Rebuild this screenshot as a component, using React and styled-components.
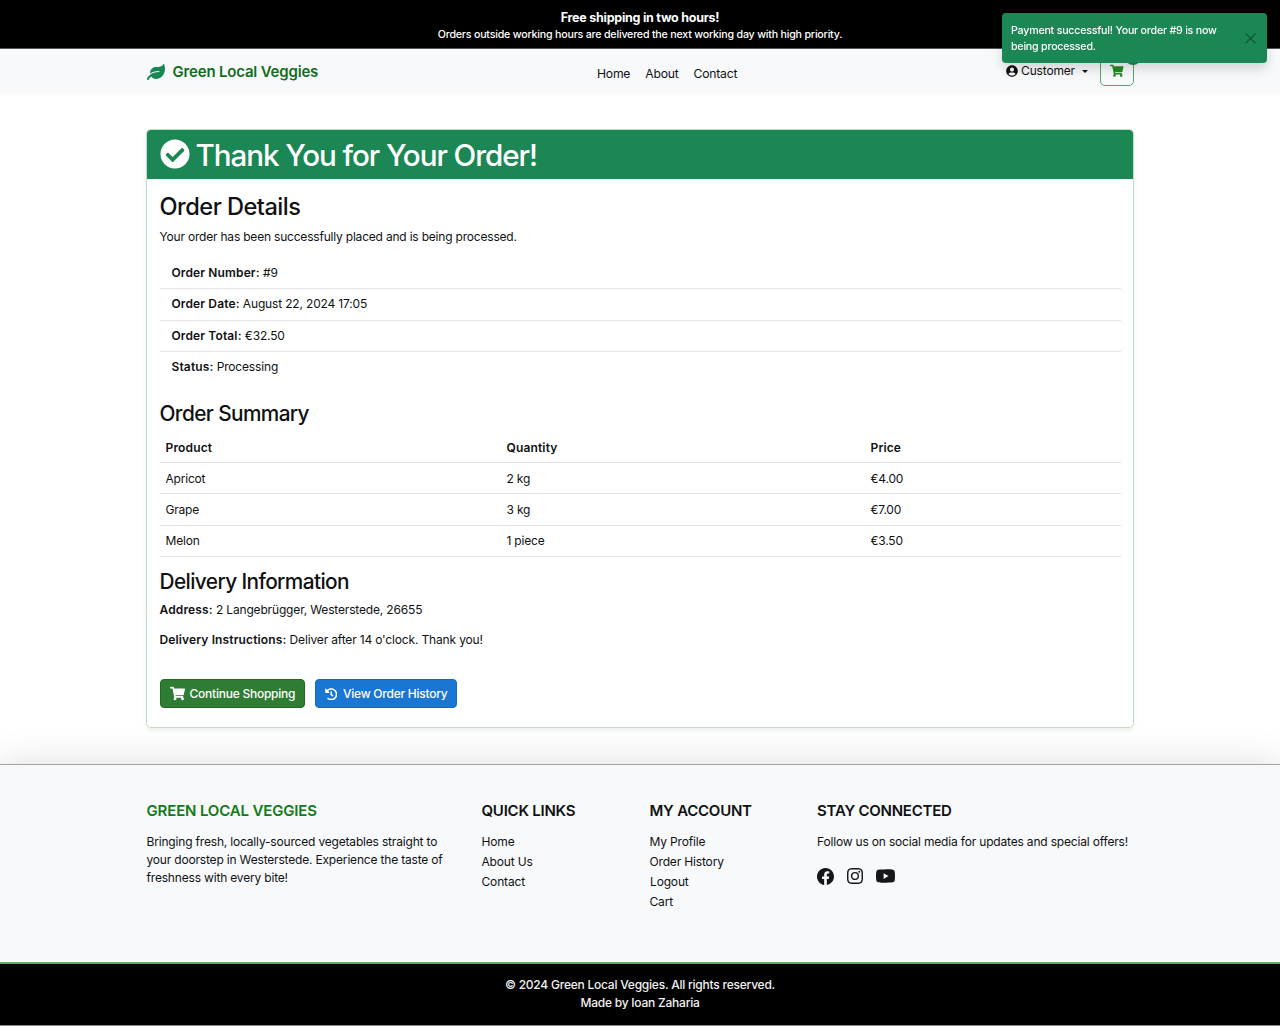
import React from "react";
import styled, { createGlobalStyle, css } from "styled-components";
import {
  FaCheckCircle,
  FaHistory,
  FaLeaf,
  FaShoppingCart,
  FaUserCircle,
} from "react-icons/fa";
import { BsFacebook, BsInstagram, BsYoutube } from "react-icons/bs";

const GlobalStyle = createGlobalStyle`
  * { box-sizing: border-box; }
  body {
    margin: 0;
    background: #fff;
    color: #0f1112;
    font-family: Inter, "Liberation Sans", sans-serif;
    font-size: 12px;
    line-height: 18.3px;
    letter-spacing: -0.16px;
  }
  h1, h2, h3, h4, p, ul { margin: 0; padding: 0; font-weight: 400; }
  ul { list-style: none; }
  a { color: inherit; text-decoration: none; }
  button { font: inherit; letter-spacing: inherit; }
  strong { font-weight: 600; letter-spacing: 0.13px; }
  svg { display: block; flex: none; }
`;

const Page = styled.div`
  height: 1026px;
  display: flex;
  flex-direction: column;
  overflow: hidden;
`;

const Container = styled.div`
  width: 987px;
  margin: 0 auto;
`;

const Banner = styled.div`
  height: 49px;
  padding-top: 9px;
  background: #000;
  border-bottom: 1px solid #55565a;
  color: #fff;
  text-align: center;
`;

const BannerTitle = styled.p`
  font-size: 12.5px;
  font-weight: 700;
  line-height: 17px;
  letter-spacing: -0.25px;
`;

const BannerText = styled.p`
  font-size: 10.67px;
  font-weight: 500;
  line-height: 17px;
  letter-spacing: -0.205px;
`;

const NavBar = styled.header`
  height: 43px;
  background: #f8f9fb;
  box-shadow: 0 1px 2px rgba(0, 0, 0, 0.05);
`;

const NavInner = styled(Container)`
  height: 43px;
  display: flex;
  justify-content: space-between;
  align-items: flex-start;
`;

const Brand = styled.a`
  display: flex;
  align-items: center;
  gap: 8px;
  margin-right: 10px;
  padding-top: 13px;
  height: 33px;
  color: #126d1b;
  font-size: 15px;
  font-weight: 600;
  letter-spacing: -0.18px;

  svg { color: #198754; margin-bottom: 1px; }
`;

const NavLinks = styled.nav`
  display: flex;
  gap: 15px;
  padding-top: 16px;
  font-size: 12.2px;
  letter-spacing: -0.22px;
`;

const Account = styled.div`
  display: flex;
  justify-content: flex-end;
  align-items: flex-start;
`;

const UserMenu = styled.a`
  display: flex;
  align-items: center;
  gap: 3px;
  margin: 13px 12px 0 0;
`;

const Caret = styled.span`
  margin-left: 4px;
  border: 3.6px solid transparent;
  border-top-color: #111;
  border-bottom: 0;
`;

const CartButton = styled.a`
  position: relative;
  display: flex;
  align-items: flex-end;
  justify-content: center;
  width: 34px;
  height: 29.5px;
  margin: 7px -0.5px 0 0;
  padding-bottom: 7px;
  border: 1px solid #5aa275;
  border-radius: 5px;
  color: #218c22;
`;

const CartBadge = styled.span`
  position: absolute;
  top: -8px;
  right: -8px;
  width: 16px;
  height: 16px;
  border-radius: 8px;
  background: #198754;
`;

const Toast = styled.div`
  position: fixed;
  top: 13px;
  right: 13px;
  z-index: 10;
  display: flex;
  align-items: center;
  justify-content: space-between;
  width: 265px;
  height: 50px;
  padding: 1px 11px 0 9px;
  border-radius: 4px;
  background: #1b8754;
  box-shadow: 0 6px 12px rgba(0, 0, 0, 0.15);
  color: #fff;
  font-size: 10.67px;
  line-height: 16px;
  letter-spacing: -0.22px;
`;

const ToastText = styled.p`
  width: 222px;
  font-weight: 500;
`;

const CloseButton = styled.button`
  padding: 0;
  border: 0;
  background: none;
  color: #0f5132;
`;

const Card = styled.main`
  width: 988px;
  height: 599px;
  margin: 37px auto 0;
  border: 1px solid #bfe0c4;
  border-radius: 5px;
  box-shadow: 0 2px 4px rgba(0, 0, 0, 0.075);
  overflow: hidden;
  display: flex;
  flex-direction: column;
`;

const CardHeader = styled.div`
  display: flex;
  align-items: center;
  gap: 6px;
  height: 49px;
  padding: 0 12.5px 0;
  background: #1b8754;
  color: #fff;

  svg { margin-bottom: 1px; }
`;

const CardTitle = styled.h1`
  font-size: 29.6px;
  font-weight: 500;
  line-height: 36px;
  letter-spacing: -1.07px;
`;

const CardBody = styled.div`
  padding: 13px 12.5px 12px;
`;

const SectionTitle = styled.h2`
  font-size: ${(p) => (p.$large ? 23.6 : 20.8)}px;
  font-weight: 500;
  line-height: ${(p) => (p.$large ? 30 : 26)}px;
  letter-spacing: ${(p) => (p.$large ? -0.52 : -0.6)}px;
`;

const Lead = styled.p`
  margin-top: 6px;
  letter-spacing: -0.2px;
`;

const DetailList = styled.ul`
  margin: 12px 0 18px;
`;

const DetailRow = styled.li`
  height: 31.2px;
  padding: 6px 12px 0;
  border-bottom: 1px solid #e3e5e7;

  &:last-child { border-bottom: 0; }
`;

const SummaryTable = styled.div`
  margin: 5px 0 12px;
`;

const SummaryRow = styled.div`
  display: grid;
  grid-template-columns: 341px 364px 1fr;
  height: 31.2px;
  padding: 6.5px 6px 0;
  border-bottom: 1px solid #e1e4e7;
  font-weight: ${(p) => (p.$head ? 600 : 400)};
  letter-spacing: ${(p) => (p.$head ? 0.15 : -0.2)}px;
`;

const Info = styled.p`
  margin-top: ${(p) => p.$gap}px;
`;

const Actions = styled.div`
  display: flex;
  gap: 10px;
  margin-top: 30px;
`;

const tones = {
  green: css`background: #2e7d32; border-color: #1b6e20;`,
  blue: css`background: #1976d2; border-color: #1568c5;`,
};

const Button = styled.button`
  display: flex;
  align-items: center;
  gap: ${(p) => p.$gap}px;
  width: ${(p) => p.$width}px;
  height: 29px;
  padding: 0 9px;
  border: 1px solid;
  border-radius: 4px;
  color: #fff;
  font-weight: 500;
  letter-spacing: -0.24px;
  white-space: nowrap;
  ${(p) => tones[p.$tone]}
`;

const Footer = styled.footer`
  position: relative;
  height: 198px;
  margin-top: 36px;
  padding-top: 37px;
  background: #f8f9fb;
  border-top: 1px solid #a2a5a8;
  box-shadow: 0 -6px 30px rgba(0, 0, 0, 0.1);
`;

const FooterGrid = styled(Container)`
  display: grid;
  grid-template-columns: 335px 168px 167.5px 1fr;
`;

const FooterTitle = styled.h3`
  margin-bottom: 12.5px;
  color: ${(p) => (p.$green ? "#127a18" : "#0f1112")};
  font-size: 15px;
  font-weight: 600;
  line-height: 18px;
  letter-spacing: ${(p) => (p.$green ? -0.15 : -0.23)}px;
  white-space: nowrap;
`;

const FooterText = styled.p`
  white-space: ${(p) => (p.$nowrap ? "nowrap" : "normal")};
  max-width: ${(p) => (p.$nowrap ? "none" : "305px")};
  letter-spacing: -0.18px;
`;

const FooterLink = styled.li`
  margin: 0 0 2px ${(p) => (p.$inset ? 0.5 : 0)}px;
`;

const Social = styled.div`
  display: flex;
  align-items: center;
  gap: 13px;
  margin-top: 16px;
  color: #15171a;
`;

const Copyright = styled.div`
  position: relative;
  height: 64px;
  padding-top: 12px;
  background: #000;
  border-top: 2px solid #5fae66;
  border-bottom: 1px solid #8a8a8a;
  color: #f2f2f2;
  font-size: 12px;
  letter-spacing: -0.23px;
  text-align: center;

  p { font-weight: 500; }
`;

const details = [
  ["Order Number:", "#9"],
  ["Order Date:", "August 22, 2024 17:05"],
  ["Order Total:", "€32.50"],
  ["Status:", "Processing"],
];

const items = [
  ["Apricot", "2 kg", "€4.00"],
  ["Grape", "3 kg", "€7.00"],
  ["Melon", "1 piece", "€3.50"],
];

function LinkColumn({ title, links }) {
  return (
    <div>
      <FooterTitle>{title}</FooterTitle>
      <ul>
        {links.map((link) => (
          <FooterLink key={link} $inset={link === "Logout"}><a href="#">{link}</a></FooterLink>
        ))}
      </ul>
    </div>
  );
}

export default function App() {
  return (
    <Page>
      <GlobalStyle />
      <Banner>
        <BannerTitle>Free shipping in two hours!</BannerTitle>
        <BannerText>Orders outside working hours are delivered the next working day with high priority.</BannerText>
      </Banner>
      <NavBar>
        <NavInner>
          <Brand href="#"><FaLeaf size={18} />Green Local Veggies</Brand>
          <NavLinks>
            <a href="#">Home</a>
            <a href="#">About</a>
            <a href="#">Contact</a>
          </NavLinks>
          <Account>
            <UserMenu href="#"><FaUserCircle size={12} />Customer<Caret /></UserMenu>
            <CartButton href="#"><FaShoppingCart size={13.5} /><CartBadge /></CartButton>
          </Account>
        </NavInner>
      </NavBar>
      <Card>
        <CardHeader>
          <FaCheckCircle size={30} />
          <CardTitle>Thank You for Your Order!</CardTitle>
        </CardHeader>
        <CardBody>
          <SectionTitle $large>Order Details</SectionTitle>
          <Lead>Your order has been successfully placed and is being processed.</Lead>
          <DetailList>
            {details.map(([label, value]) => (
              <DetailRow key={label}><strong>{label}</strong> {value}</DetailRow>
            ))}
          </DetailList>
          <SectionTitle>Order Summary</SectionTitle>
          <SummaryTable>
            <SummaryRow $head><span>Product</span><span>Quantity</span><span>Price</span></SummaryRow>
            {items.map(([name, amount, price]) => (
              <SummaryRow key={name}><span>{name}</span><span>{amount}</span><span>{price}</span></SummaryRow>
            ))}
          </SummaryTable>
          <SectionTitle>Delivery Information</SectionTitle>
          <Info $gap={6}><strong>Address:</strong> 2 Langebrügger, Westerstede, 26655</Info>
          <Info $gap={12}><strong>Delivery Instructions:</strong> Deliver after 14 o'clock. Thank you!</Info>
          <Actions>
            <Button $tone="green" $width={145} $gap={5}><FaShoppingCart size={15} />Continue Shopping</Button>
            <Button $tone="blue" $width={142} $gap={6}><FaHistory size={12.5} />View Order History</Button>
          </Actions>
        </CardBody>
      </Card>
      <Footer>
        <FooterGrid>
          <div>
            <FooterTitle $green>GREEN LOCAL VEGGIES</FooterTitle>
            <FooterText>
              Bringing fresh, locally-sourced vegetables straight to your doorstep in Westerstede. Experience the taste of freshness with every bite!
            </FooterText>
          </div>
          <LinkColumn title="QUICK LINKS" links={["Home", "About Us", "Contact"]} />
          <LinkColumn title="MY ACCOUNT" links={["My Profile", "Order History", "Logout", "Cart"]} />
          <div>
            <FooterTitle>STAY CONNECTED</FooterTitle>
            <FooterText $nowrap>Follow us on social media for updates and special offers!</FooterText>
            <Social>
              <BsFacebook size={17} />
              <BsInstagram size={16} />
              <BsYoutube size={19} />
            </Social>
          </div>
        </FooterGrid>
      </Footer>
      <Copyright>
        <p>© 2024 Green Local Veggies. All rights reserved.</p>
        <p>Made by Ioan Zaharia</p>
      </Copyright>
      <Toast>
        <ToastText>Payment successful! Your order #9 is now being processed.</ToastText>
        <CloseButton aria-label="Close">
          <svg width="11" height="11" viewBox="0 0 11 11" fill="none" stroke="currentColor" strokeWidth="1.2" strokeLinecap="round">
            <path d="M.8.8l9.4 9.4M10.2.8L.8 10.2" />
          </svg>
        </CloseButton>
      </Toast>
    </Page>
  );
}
